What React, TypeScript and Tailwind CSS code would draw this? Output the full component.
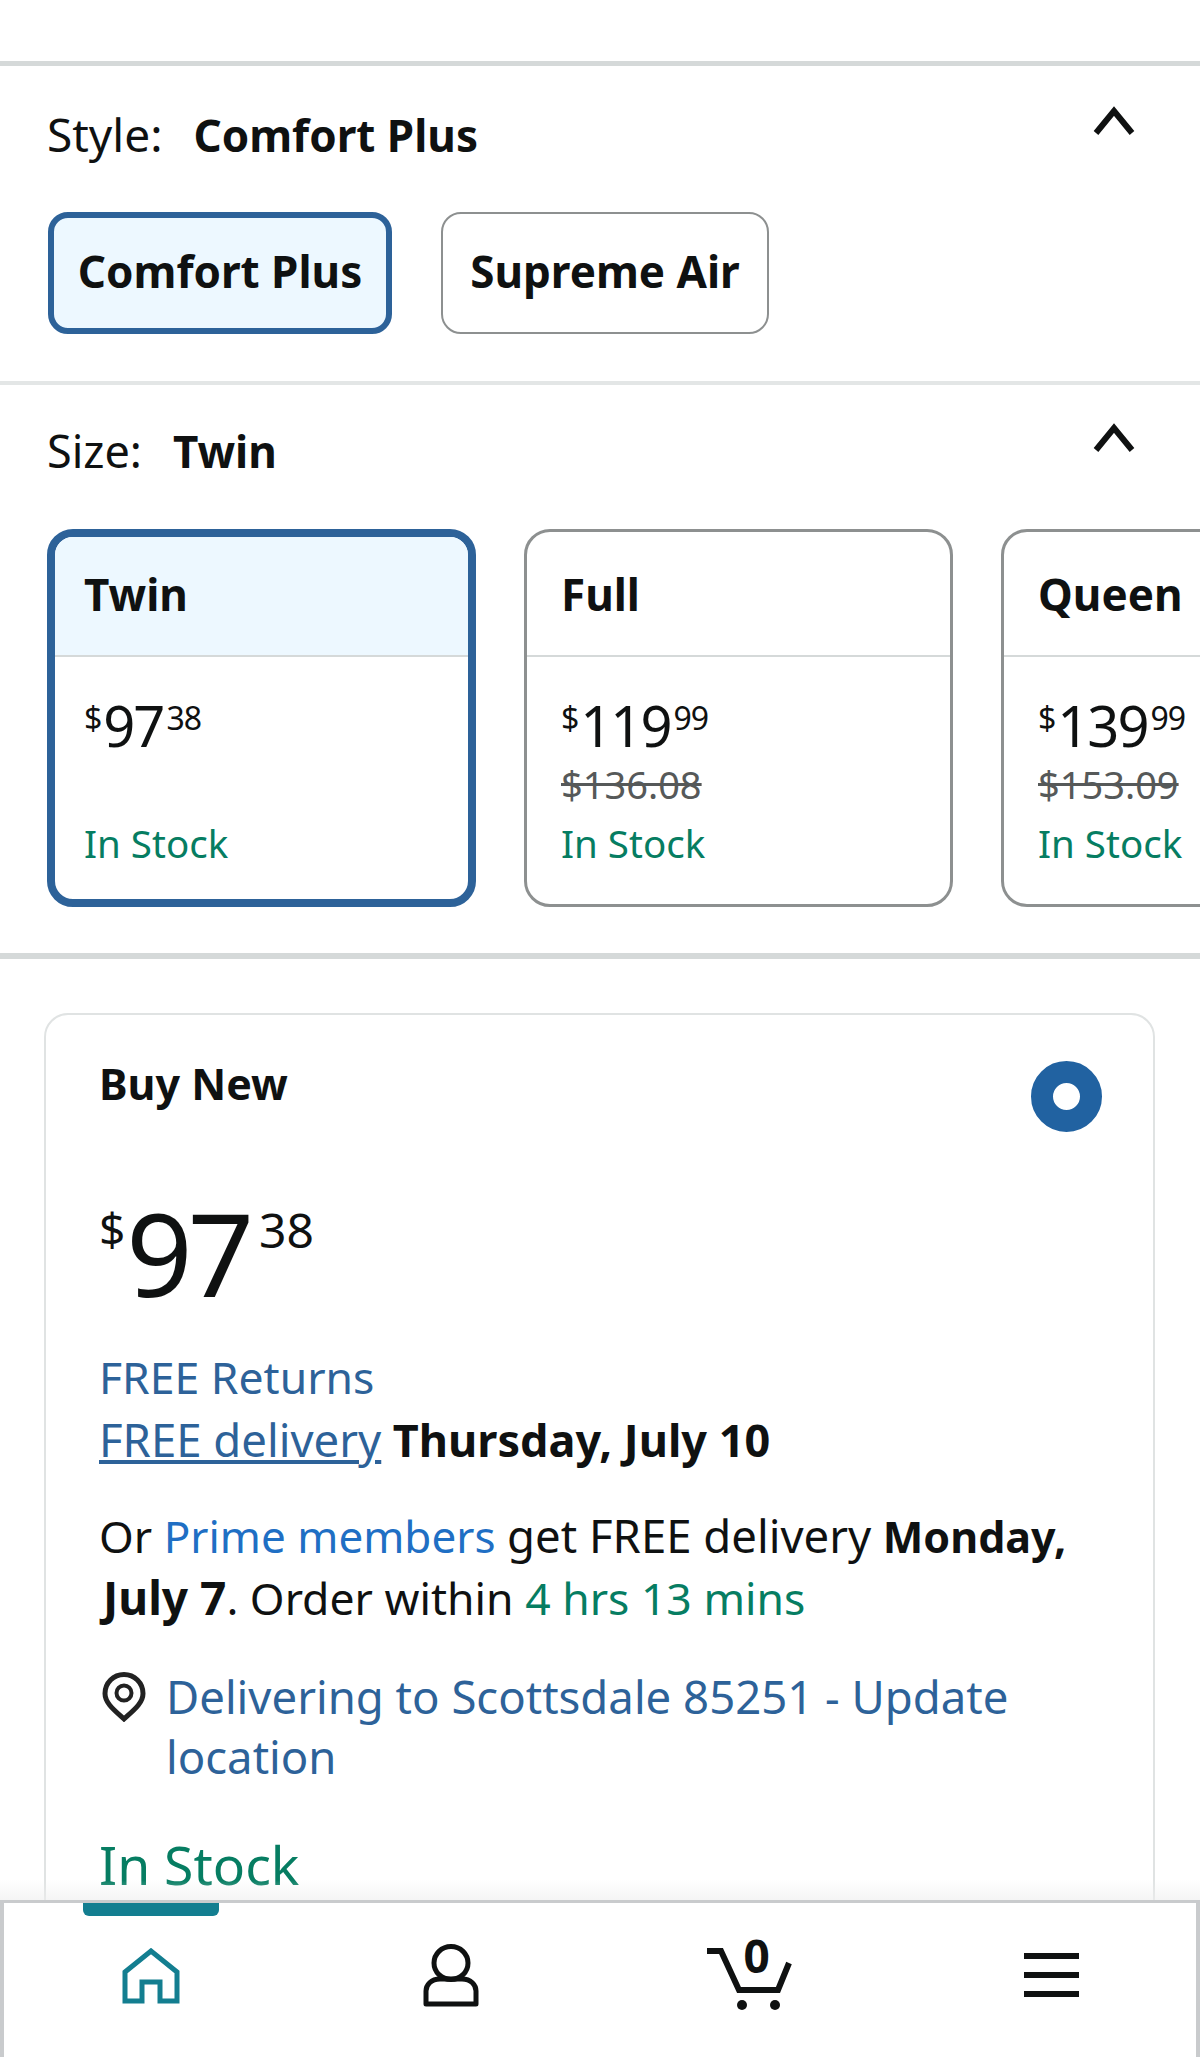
import React from 'react';

const ink = 'text-[#0f1111]';

function Chevron() {
  return (
    <svg width="42" height="30" viewBox="0 0 42 30" fill="none" className="shrink-0">
      <path d="M3 27 L21 5 L39 27" stroke="#0f1111" strokeWidth="6" />
    </svg>
  );
}

function Price({ whole, cents }: { whole: string; cents: string }) {
  return (
    <div className={`flex items-start h-[56px] ${ink}`}>
      <span className="text-[32px] leading-[42px]">$</span>
      <span className="text-[56px] leading-[56px] tracking-[-2px] ml-[1px]">{whole}</span>
      <span className="text-[32px] leading-[42px] tracking-[-1px] ml-[3px]">{cents}</span>
    </div>
  );
}

function SizeCard({ name, whole, cents, was, selected }: { name: string; whole: string; cents: string; was?: string; selected?: boolean }) {
  return (
    <div
      className={`w-[429px] h-[378px] shrink-0 rounded-[26px] overflow-hidden flex flex-col ${
        selected ? 'border-[8px] border-[#2d6299]' : 'border-[3px] border-[#8d9090]'
      }`}
    >
      <div
        className={`border-b-2 border-[#d5d9d9] flex items-center ${
          selected ? 'h-[120px] bg-[#edf8ff] pl-[29px]' : 'h-[125px] pl-[34px]'
        }`}
      >
        <span className={`text-[44px] font-bold leading-[56px] ${selected ? 'pb-[4px]' : ''} ${ink}`}>{name}</span>
      </div>
      <div className={`flex flex-col ${selected ? 'pl-[29px]' : 'pl-[34px]'} pt-[40px]`}>
        <Price whole={whole} cents={cents} />
        <div className="h-[50px] mt-[6px] text-[38px] leading-[50px] text-[#565959] line-through">{was}</div>
        <div className="h-[50px] mt-[9px] text-[38.5px] leading-[50px] text-[#067d62]">In Stock</div>
      </div>
    </div>
  );
}

function Header({ label, value, labelSize }: { label: string; value: string; labelSize: string }) {
  return (
    <div className="flex justify-between items-start h-[56px] pl-[47px] pr-[65px]">
      <div className={`leading-[56px] ${labelSize} ${ink}`}>
        {label}
        <span className="font-bold text-[44px] ml-[31px]">{value}</span>
      </div>
      <Chevron />
    </div>
  );
}

function BottomNav() {
  return (
    <div className="absolute left-0 right-0 bottom-0 h-[157px] bg-white border-t-[3px] border-x-[4px] border-[#c9cbcd] border-b-0">
      <div className="absolute left-[79px] top-0 w-[136px] h-[13px] bg-[#137e90] rounded-b-[6px]" />
      <div className="grid grid-cols-4 h-full">
        <div className="flex justify-center pt-[45px] pr-[4px]">
          <svg width="58" height="56" viewBox="0 0 58 56" fill="none">
            <path d="M3 53 V24 L29 3 L55 24 V53 H38 V34 H20 V53 Z" stroke="#137e90" strokeWidth="5" />
          </svg>
        </div>
        <div className="flex justify-center pt-[41px]">
          <svg width="56" height="63" viewBox="0 0 56 63" fill="none">
            <ellipse cx="28" cy="19" rx="17" ry="16.5" stroke="#0f1111" strokeWidth="5" />
            <path
              d="M17 35 H39 C48 35 53 41 53 47 V60 H3 V47 C3 41 8 35 17 35 Z"
              stroke="#0f1111"
              strokeWidth="5"
              strokeLinejoin="round"
            />
          </svg>
        </div>
        <div className="flex justify-center pt-[35px] pl-[1px]">
          <div className="relative w-[86px] h-[72px]">
            <svg width="86" height="72" viewBox="0 0 86 72" fill="none">
              <path d="M0 13 H14 L32 52 H71 L82 25" stroke="#0f1111" strokeWidth="6" />
              <circle cx="35" cy="67" r="5" fill="#0f1111" />
              <circle cx="68" cy="67" r="5" fill="#0f1111" />
            </svg>
            <span className={`absolute left-[37px] -top-[6px] text-[46px] leading-[46px] font-bold ${ink}`}>0</span>
          </div>
        </div>
        <div className="flex justify-center pt-[50px] pl-[8px]">
          <div className="w-[55px] flex flex-col gap-[13px]">
            <div className="h-[6px] bg-[#0f1111]" />
            <div className="h-[6px] bg-[#0f1111]" />
            <div className="h-[6px] bg-[#0f1111]" />
          </div>
        </div>
      </div>
    </div>
  );
}

export default function App() {
  return (
    <div className="relative w-[1200px] h-[2057px] overflow-hidden bg-white font-['Noto_Sans',sans-serif]">
      <div className="h-[61px]" />
      <div className="h-[5px] bg-[#d5d9d9]" />

      <section className="pt-[40px] pb-[47px]">
        <Header label="Style:" value="Comfort Plus" labelSize="text-[46px]" />
        <div className="flex gap-[49px] pl-[48px] mt-[50px]">
          <button className={`w-[344px] h-[122px] rounded-[20px] border-[6px] border-[#2d6299] bg-[#edf8ff] text-[44px] font-bold pb-[4px] ${ink}`}>
            Comfort Plus
          </button>
          <button className={`w-[328px] h-[122px] rounded-[20px] border-[2px] border-[#8d9090] bg-white text-[44px] font-bold pb-[4px] ${ink}`}>
            Supreme Air
          </button>
        </div>
      </section>

      <div className="h-[4px] bg-[#e3e6e6]" />

      <section className="pt-[38px] pb-[46px]">
        <Header label="Size:" value="Twin" labelSize="text-[45px]" />
        <div className="flex gap-[48px] pl-[47px] mt-[50px]">
          <SizeCard name="Twin" whole="97" cents="38" selected />
          <SizeCard name="Full" whole="119" cents="99" was="$136.08" />
          <SizeCard name="Queen" whole="139" cents="99" was="$153.09" />
        </div>
      </section>

      <div className="h-[6px] bg-[#d5d9d9]" />

      <div className={`mt-[54px] ml-[44px] w-[1111px] h-[1000px] border-2 border-[#e0e3e3] rounded-[24px] pt-[41px] pl-[53px] pr-[51px] ${ink}`}>
        <div className="flex justify-between items-start">
          <span className="text-[43px] leading-[56px] font-bold">Buy New</span>
          <span className="mt-[5px] w-[71px] h-[71px] rounded-full border-[22px] border-[#2162a1] bg-white" />
        </div>

        <div className="flex items-start mt-[56px] h-[125px]">
          <span className="text-[46px] leading-[60px] mt-[10px]">$</span>
          <span className="text-[116px] leading-[125px] tracking-[-5px] mt-[2px] ml-[1px]">97</span>
          <span className="text-[48px] leading-[60px] mt-[12px] ml-[10px]">38</span>
        </div>

        <div className="mt-[33px] text-[44.5px] leading-[62px]">
          <div className="text-[#2d6299]">FREE Returns</div>
          <div>
            <span className="text-[#2d6299] underline text-[45.5px]">FREE delivery</span>{' '}
            <span className="font-bold text-[45px]">Thursday, July 10</span>
          </div>
        </div>

        <p className="mt-[34px] text-[44.5px] leading-[61px]">
          Or <span className="text-[#1f6fc4] text-[44px]">Prime members</span>{' '}
          <span className="text-[45.5px]">get FREE delivery</span> <span className="font-bold text-[43px]">Monday,</span>{' '}
          <span className="font-bold text-[46px] ml-[4px]">July 7</span>. Order within{' '}
          <span className="text-[#067d62]">4 hrs 13 mins</span>
        </p>

        <div className="flex items-start mt-[38px]">
          <svg width="44" height="50" viewBox="0 0 44 50" fill="none" className="shrink-0 mt-[6px] ml-[3px]">
            <path d="M22 47 C12 38 3 31 3 21.5 A19 19 0 0 1 41 21.5 C41 31 32 38 22 47 Z" stroke="#222" strokeWidth="5" />
            <circle cx="22" cy="21" r="7.5" stroke="#222" strokeWidth="4" />
          </svg>
          <p className="ml-[20px] text-[45.5px] leading-[60px] text-[#2d6299]">Delivering to Scottsdale 85251 - Update location</p>
        </div>

        <div className="mt-[44px] text-[53.5px] leading-[70px] text-[#067d62]">In Stock</div>
      </div>

      <div className="absolute left-0 right-0 bottom-[157px] h-[20px] bg-gradient-to-b from-transparent to-[#eeeeee]/60" />
      <BottomNav />
    </div>
  );
}
